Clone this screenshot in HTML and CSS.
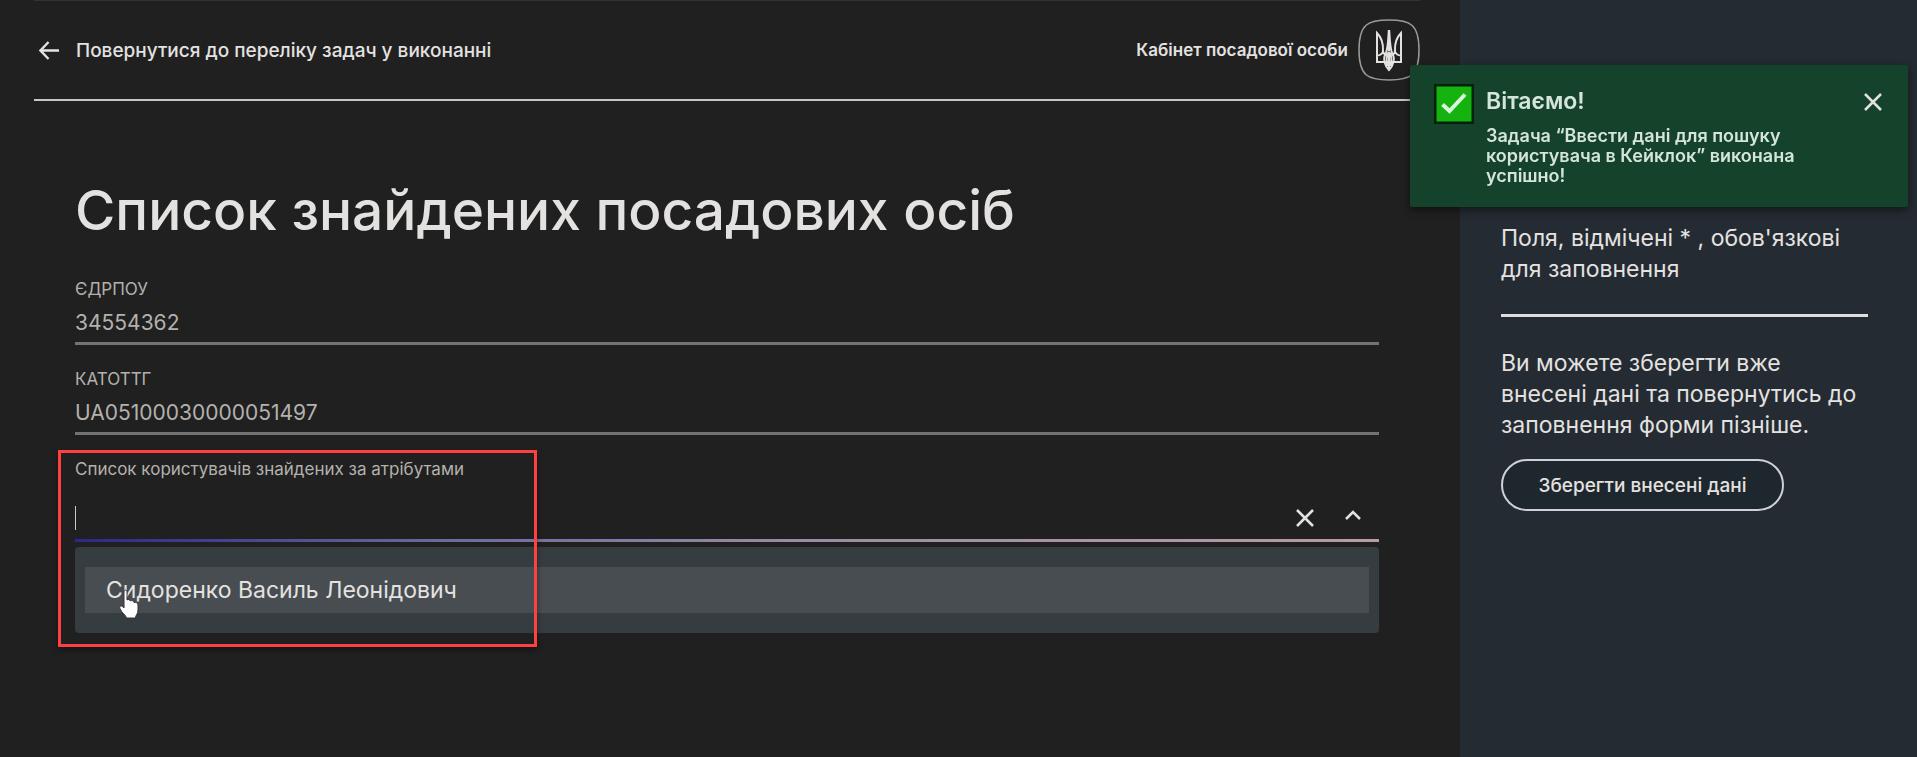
FILE: index.html
```
<!DOCTYPE html>
<html lang="uk">
<head>
  <meta charset="UTF-8">
  <meta name="viewport" content="width=device-width, initial-scale=1">
  <title>Список знайдених посадових осіб</title>
  <link rel="stylesheet" href="styles.css">
</head>
<body>
  <div class="page">
    <main class="main">
      <header class="header">
        <a class="back" href="#">
          <svg class="back-icon" viewBox="0 0 22 20"><path d="M21 10H2M10 1L1.5 10L10 19"/></svg>
          Повернутися до переліку задач у виконанні
        </a>
        <div class="cabinet">
          <span>Кабінет посадової особи</span>
          <svg class="emblem" viewBox="0 0 62 62">
            <path class="emblem-frame" d="M31 1C52 1 61 5 61 31S52 61 31 61S1 57 1 31S10 1 31 1Z"/>
            <path class="trident" d="M19 14V43H43V14C39 18 36.500 24 37 32C37 34 36 35 34.500 35.500C32.500 31 32 26 31 12C30 26 29.500 31 27.500 35.500C26 35 25 34 25 32C25.500 24 23 18 19 14ZM19 36.500C22.500 36.500 24 35 25 32.500M43 36.500C39.500 36.500 38 35 37 32.500M27.500 35.500C26 37 26 40 26.500 43C27.500 47 29 49 31 51C33 49 34.500 47 35.500 43C36 40 36 37 34.500 35.500M31 33V50M31 33C28.500 36 28 41 29.500 47M31 33C33.500 36 34 41 32.500 47"/>
            <path class="trident-core" d="M31 11V32"/>
          </svg>
        </div>
      </header>

      <form class="form">
        <h1 class="title">Список знайдених посадових осіб</h1>

        <div class="field">
          <label class="label" for="edrpou">ЄДРПОУ</label>
          <input class="input" id="edrpou" type="text" value="34554362" readonly>
        </div>

        <div class="field">
          <label class="label" for="katottg">КАТОТТГ</label>
          <input class="input" id="katottg" type="text" value="UA05100030000051497" readonly>
        </div>

        <div class="combo">
          <label class="label" for="users">Список користувачів знайдених за атрібутами</label>
          <div class="combo-control">
            <span class="caret"></span>
            <input class="combo-input" id="users" type="text" role="combobox" aria-expanded="true" aria-controls="usersList">
            <button class="icon-btn" type="button" aria-label="Очистити">
              <svg width="18" height="18" viewBox="0 0 18 18"><path d="M1 1L17 17M17 1L1 17"/></svg>
            </button>
            <button class="icon-btn" type="button" aria-label="Згорнути">
              <svg width="18" height="18" viewBox="0 0 18 18"><path d="M2 10L9 3L16 10"/></svg>
            </button>
          </div>
          <ul class="options" id="usersList" role="listbox">
            <li class="option" role="option" aria-selected="false">Сидоренко Василь Леонідович</li>
          </ul>
          <div class="highlight"></div>
          <svg class="pointer" viewBox="0 0 22 30"><path d="M6 3C6 0.500 9 0.500 9 3V11C10 10 12 10.500 12.500 12C14 11 16 12 16 13.500C18 13 20 14 20 16V21C20 25 17.500 26 17.500 29H8.500C8 26 3.500 24 2 19.500C1 17 3.500 16 5 18L6 19Z"/></svg>
        </div>
      </form>
    </main>

    <aside class="sidebar">
      <p class="hint">Поля, відмічені * , обов'язкові для заповнення</p>
      <p class="save-text">Ви можете зберегти вже внесені дані та повернутись до заповнення форми пізніше.</p>
      <button class="save-btn" type="button">Зберегти внесені дані</button>
    </aside>
  </div>

  <div class="toast" role="status">
    <svg class="toast-icon" viewBox="0 0 40 40">
      <rect x="1" y="1" width="38" height="38"/>
      <path d="M8.500 20.500L15.500 27L31 10.500"/>
    </svg>
    <div class="toast-body">
      <h2 class="toast-title">Вітаємо!</h2>
      <p class="toast-text">Задача “Ввести дані для пошуку користувача в Кейклок” виконана успішно!</p>
    </div>
    <button class="icon-btn toast-close" type="button" aria-label="Закрити">
      <svg width="18" height="18" viewBox="0 0 18 18"><path d="M1 1L17 17M17 1L1 17"/></svg>
    </button>
  </div>
</body>
</html>
```
FILE: styles.css
```
* {
  box-sizing: border-box;
}

body {
  margin: 0;
  background: #202020;
  color: #e4e2e0;
  font-family: Inter, "Noto Sans", sans-serif;
}

.page {
  display: flex;
  min-height: 100vh;
}

.main {
  flex: 1;
  padding: 0 40px 0 34px;
}

.header {
  display: flex;
  justify-content: space-between;
  align-items: center;
  height: 101px;
  border-top: 1px solid #333;
  border-bottom: 2px solid #cbc5c6;
}

.back {
  display: flex;
  align-items: center;
  gap: 16px;
  padding-left: 5px;
  color: inherit;
  font-size: 19px;
  font-weight: 500;
  text-decoration: none;
}

.back-icon {
  width: 21px;
  height: 19px;
}

svg path {
  fill: none;
  stroke: #e4e2e0;
  stroke-width: 2.5;
}

.cabinet {
  display: flex;
  align-items: center;
  gap: 10px;
  font-size: 17px;
  font-weight: 600;
}

.emblem {
  width: 62px;
  height: 62px;
}

.emblem .emblem-frame {
  stroke: #9a9a9a;
  stroke-width: 1.5;
}

.emblem .trident {
  stroke-width: 2;
}

.form {
  padding: 79px 41px 0;
}

.title {
  margin: 0 0 35px;
  font-size: 55px;
  font-weight: 500;
  line-height: 60px;
}

.field {
  display: flex;
  flex-direction: column;
  margin-bottom: 20px;
  color: #b4b1ad;
}

.label {
  color: #b4b1ad;
  font-size: 17px;
  line-height: 28px;
}

.input {
  height: 42px;
  padding: 0;
  border: 0;
  border-bottom: 3px solid #737373;
  background: none;
  color: inherit;
  font: inherit;
  font-size: 21px;
  outline: none;
}

.combo {
  position: relative;
}

.combo-control {
  display: flex;
  align-items: center;
  gap: 12px;
  height: 59px;
  padding: 14px 8px 0 0;
  border-bottom: 3px solid;
  border-image: linear-gradient(to right, #29298a, #6a6a9c 28%, #9a8ba3 55%, #b89ba5) 1;
}

.combo-input {
  flex: 1;
  border: 0;
  background: none;
  color: inherit;
  font: inherit;
  font-size: 21px;
  outline: none;
}

.caret {
  position: absolute;
  width: 1px;
  height: 24px;
  background: #c8c8c8;
}

.icon-btn {
  display: flex;
  justify-content: center;
  width: 36px;
  padding: 8px;
  border: 0;
  background: none;
  cursor: pointer;
}

.options {
  margin: 5px 0 0;
  padding: 20px 10px;
  border-radius: 4px;
  background: #363d41;
  list-style: none;
}

.option {
  padding: 0 21px;
  background: #484d51;
  font-size: 23px;
  line-height: 46px;
}

/* frame over the list of found users */
.highlight {
  position: absolute;
  top: -5px;
  left: -17px;
  width: 479px;
  height: 197px;
  border: 3px solid #ff4040;
  box-shadow: 0 3px 6px rgba(0, 0, 0, 0.4);
}

.pointer {
  position: absolute;
  top: 134px;
  left: 43px;
  width: 22px;
  height: 30px;
}

.pointer path {
  fill: #fff;
  stroke: #30353a;
  stroke-width: 1;
}

.sidebar {
  width: 457px;
  padding: 223px 49px 0 41px;
  background: #242b32;
  font-size: 23px;
  line-height: 31px;
}

.hint {
  margin: 0;
  padding-bottom: 29px;
  border-bottom: 3px solid #dedede;
}

.save-text {
  margin: 31px 0 18px;
}

.save-btn {
  width: 283px;
  height: 52px;
  border: 2px solid #cfd2d4;
  border-radius: 26px;
  background: #1e272e;
  color: inherit;
  font: inherit;
  font-size: 19px;
  font-weight: 500;
  cursor: pointer;
}

.toast {
  position: fixed;
  top: 65px;
  right: 9px;
  display: flex;
  align-items: flex-start;
  width: 498px;
  height: 142px;
  padding: 19px 17px 0 24px;
  border-radius: 2px;
  background: #14422b;
  color: #d5e5da;
  box-shadow: 0 3px 8px rgba(0, 0, 0, 0.5);
}

.toast-icon {
  flex: none;
  width: 40px;
  height: 40px;
}

.toast-icon rect {
  fill: #16b310;
  stroke: #04200a;
  stroke-width: 3;
}

.toast-icon path {
  stroke: #d9f5dc;
  stroke-width: 4;
}

.toast-body {
  flex: 1;
  padding-left: 12px;
}

.toast-title {
  margin: 2px 0 10px;
  font-size: 23px;
  font-weight: 600;
  line-height: 30px;
}

.toast-text {
  margin: 0;
  font-size: 18px;
  font-weight: 600;
  line-height: 20px;
}

.toast-close {
  margin-top: 1px;
}
```
